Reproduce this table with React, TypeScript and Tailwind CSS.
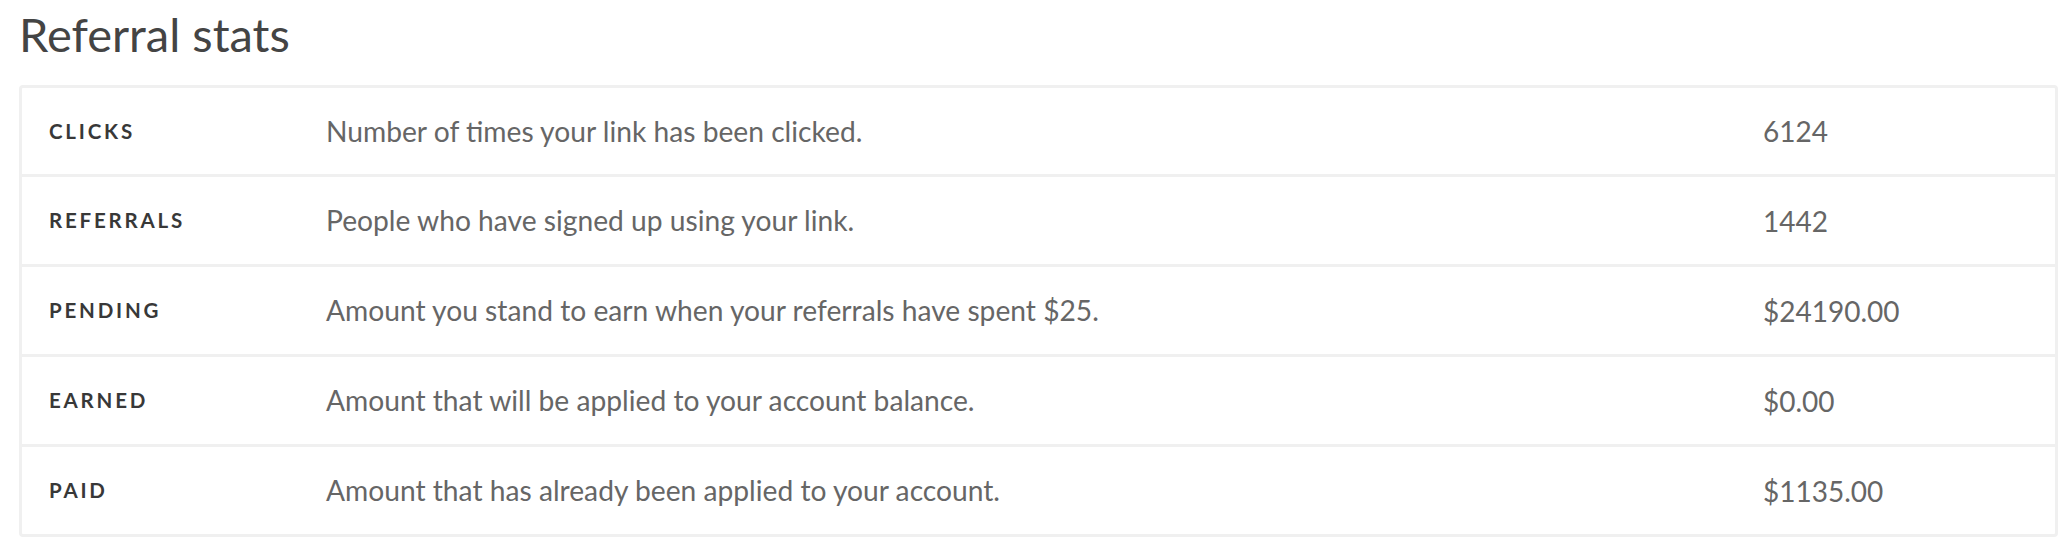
const stats = [
  { label: 'Clicks', desc: 'Number of times your link has been clicked.', value: '6124' },
  { label: 'Referrals', desc: 'People who have signed up using your link.', value: '1442' },
  { label: 'Pending', desc: 'Amount you stand to earn when your referrals have spent $25.', value: '$24190.00' },
  { label: 'Earned', desc: 'Amount that will be applied to your account balance.', value: '$0.00' },
  { label: 'Paid', desc: 'Amount that has already been applied to your account.', value: '$1135.00' },
]

export default function App() {
  return (
    <div className="min-h-[558px] bg-white pl-[19px] pr-px font-['Lato',sans-serif]">
      <h2 className="pt-[6px] text-[47px] leading-[57px] font-normal text-[#444]">Referral stats</h2>

      {/* Stats table */}
      <div className="mt-[22px] rounded-[4px] border-[3px] border-[#f0f0f0] bg-white">
        {stats.map((s, i) => (
          <div
            key={s.label}
            className={`grid grid-cols-[304px_1437px_1fr] items-center ${i > 0 ? 'h-[90px] border-t-[3px] border-[#f0f0f0]' : 'h-[86px]'}`}
          >
            <div className="pl-[27px] text-[20.5px] font-bold uppercase tracking-[2.8px] text-[#383838]">{s.label}</div>
            <div className="text-[28.2px] text-[#666]">{s.desc}</div>
            <div className="text-[28px] text-[#666]">{s.value}</div>
          </div>
        ))}
      </div>
    </div>
  )
}
